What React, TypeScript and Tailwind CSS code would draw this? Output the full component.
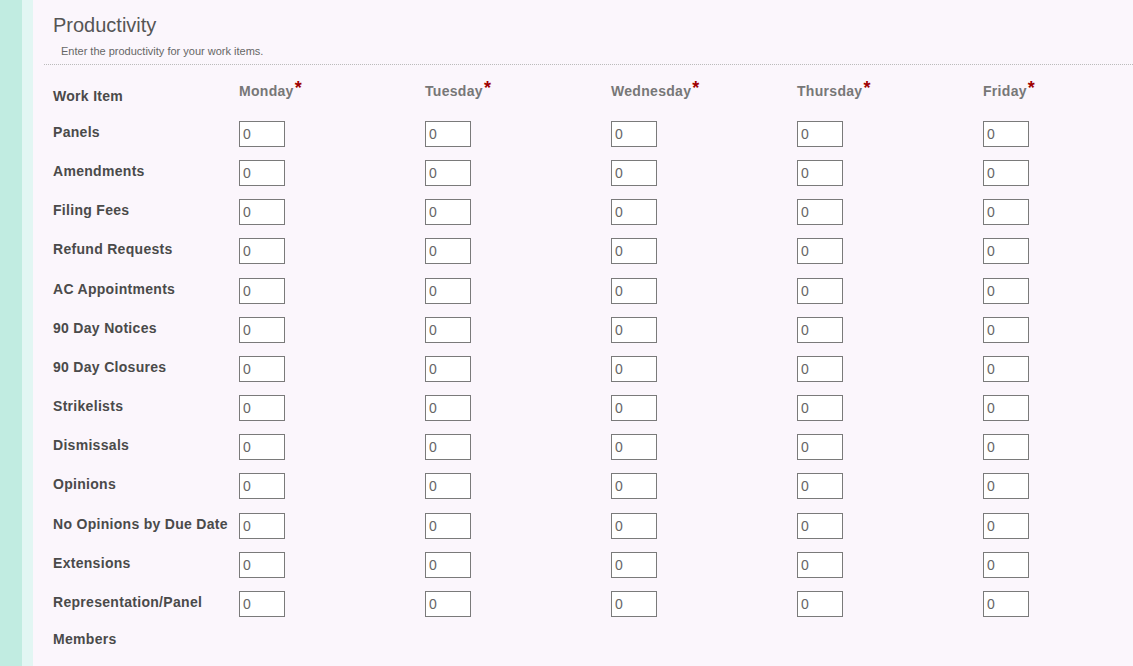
import React from "react";

const days = ["Monday", "Tuesday", "Wednesday", "Thursday", "Friday"];

const items = [
  "Panels",
  "Amendments",
  "Filing Fees",
  "Refund Requests",
  "AC Appointments",
  "90 Day Notices",
  "90 Day Closures",
  "Strikelists",
  "Dismissals",
  "Opinions",
  "No Opinions by Due Date",
  "Extensions",
  "Representation/Panel Members",
];

export default function App() {
  return (
    <div className="flex min-h-screen font-['Liberation_Sans',Arial,sans-serif]">
      <div className="w-[22px] shrink-0 bg-[#c1ece1]" />
      <div className="w-[11px] shrink-0 bg-[#e2f6f3]" />
      <div className="flex-1 bg-[#fbf6fc] pl-[11px] overflow-hidden">
        {/* section header */}
        <div className="pl-[9px] pt-[13px] pb-[6px]">
          <h1 className="text-[20px] leading-[24px] text-[#555]">Productivity</h1>
          <p className="pl-[8px] mt-[7px] text-[11px] leading-[14px] text-[#666]">
            Enter the productivity for your work items.
          </p>
        </div>

        <div className="border-t border-dotted border-[#bbb] pl-[9px]">
          {/* column headings */}
          <div className="grid grid-cols-[185px_186px_186px_186px_186px_186px] h-[49px]">
            <div className="pt-[23px] text-[14px] leading-[16px] font-bold tracking-[0.3px] text-[#4a4a4a]">
              Work Item
            </div>
            {days.map((d) => (
              <div
                key={d}
                className="pt-[17px] pl-[1px] text-[14px] leading-[16px] font-bold tracking-[0.3px] text-[#777] whitespace-nowrap"
              >
                {d}
                <span className="relative -top-[2px] ml-[1px] text-[18px] text-[#a00000]">*</span>
              </div>
            ))}
          </div>

          {/* rows */}
          {items.map((item) => (
            <div
              key={item}
              className="grid grid-cols-[185px_186px_186px_186px_186px_186px] min-h-[39.17px]"
            >
              <div className="pr-[4px] text-[14px] leading-[37px] font-bold tracking-[0.3px] text-[#4a4a4a]">
                {item}
              </div>
              {days.map((d) => (
                <div key={d} className="pl-[1px] pt-[7px]">
                  <input
                    type="text"
                    defaultValue="0"
                    className="block w-[46px] h-[26px] border border-[#7a7a7a] bg-white px-[3px] text-[14px] text-[#666] outline-none font-['Liberation_Sans',Arial,sans-serif]"
                  />
                </div>
              ))}
            </div>
          ))}
        </div>
      </div>
    </div>
  );
}
